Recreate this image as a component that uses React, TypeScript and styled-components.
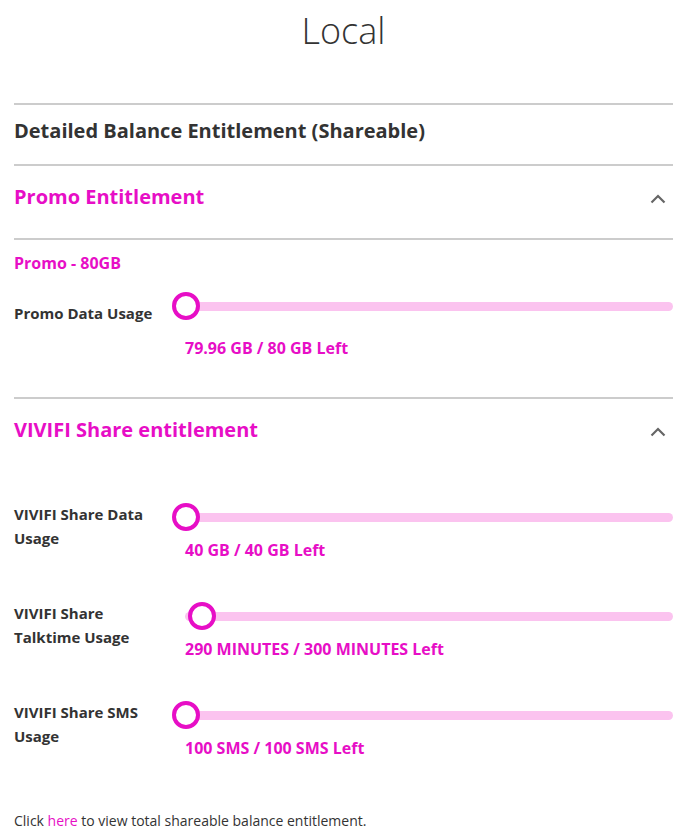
import React from "react";
import styled, { createGlobalStyle } from "styled-components";

const Global = createGlobalStyle`
  html, body { margin: 0; padding: 0; background: #fff; }
  body { font-family: "Open Sans", "Liberation Sans", sans-serif; color: #333; }
  * { box-sizing: border-box; }
`;

const MAGENTA = "#e70ec6";
const TRACK = "#fbc3ef";

const Page = styled.div`
  padding: 7px 21px 0 14px;
  width: 694px;
`;

const Title = styled.h1`
  margin: 0 0 48px;
  font-size: 36px;
  line-height: 48px;
  font-weight: 300;
  text-align: center;
  color: #333;
`;

const Block = styled.section`
  border-top: 2px solid #cccccc;
`;

const MainHeading = styled.h2`
  margin: 0;
  padding: 13px 0 20px;
  font-size: 20px;
  line-height: 26px;
  font-weight: 700;
  color: #333;
`;

const AccordionHeader = styled.div<{ $divider?: boolean }>`
  display: flex;
  align-items: center;
  justify-content: space-between;
  padding: ${(p) => (p.$divider ? "17px 0 27px" : "17px 0 0")};
  border-bottom: ${(p) => (p.$divider ? "2px solid #cccccc" : "none")};
`;

const AccordionTitle = styled.h3`
  margin: 0;
  font-size: 20px;
  line-height: 28px;
  font-weight: 700;
  color: ${MAGENTA};
`;

const Chevron = styled.svg`
  width: 16px;
  height: 10px;
  margin-right: 7px;
  margin-top: 4px;
`;

const Body = styled.div<{ $top: number; $bottom: number }>`
  padding-top: ${(p) => p.$top}px;
  padding-bottom: ${(p) => p.$bottom}px;
  display: flex;
  flex-direction: column;
`;

const PlanName = styled.div`
  font-size: 16px;
  line-height: 22px;
  font-weight: 700;
  color: ${MAGENTA};
  margin-bottom: 18px;
`;

const UsageRow = styled.div<{ $gap: number }>`
  display: grid;
  grid-template-columns: 158px 1fr;
  align-items: start;
  & + & { margin-top: ${(p) => p.$gap}px; }
`;

const Label = styled.div<{ $offset: number }>`
  margin-top: ${(p) => p.$offset}px;
  font-size: 15px;
  line-height: 24px;
  font-weight: 700;
  color: #333;
  padding-right: 8px;
`;

const SliderCol = styled.div`
  display: flex;
  flex-direction: column;
`;

const Slider = styled.div`
  position: relative;
  height: 28px;
  display: flex;
  align-items: center;
  padding-left: 13px;
`;

const Track = styled.div`
  flex: 1;
  height: 9px;
  border-radius: 5px;
  background: ${TRACK};
`;

const Thumb = styled.div`
  position: absolute;
  top: 0;
  width: 28px;
  height: 28px;
  border-radius: 50%;
  border: 4px solid ${MAGENTA};
  background: #fff;
`;

const Value = styled.div<{ $gap: number }>`
  margin-top: ${(p) => p.$gap}px;
  padding-left: 13px;
  font-size: 16px;
  line-height: 22px;
  font-weight: 700;
  color: ${MAGENTA};
`;

const Footer = styled.p`
  margin: 0;
  font-size: 14px;
  line-height: 20px;
  font-weight: 400;
  color: #333;
`;

const Link = styled.a`
  color: ${MAGENTA};
  text-decoration: none;
`;

const ChevronUp = () => (
  <Chevron viewBox="0 0 16 10" fill="none">
    <path d="M1.5 8.5 L8 2 L14.5 8.5" stroke="#666" strokeWidth="2.2" />
  </Chevron>
);

type Usage = { label: string; used: number; total: number; value: string };

const TRACK_SPAN = 488;

const UsageSlider = ({
  u,
  labelOffset,
  valueGap,
  gap,
}: {
  u: Usage;
  labelOffset: number;
  valueGap: number;
  gap: number;
}) => {
  const left = Math.round((u.used / u.total) * TRACK_SPAN);
  return (
    <UsageRow $gap={gap}>
      <Label $offset={labelOffset}>{u.label}</Label>
      <SliderCol>
        <Slider>
          <Track />
          <Thumb style={{ left }} />
        </Slider>
        <Value $gap={valueGap}>{u.value}</Value>
      </SliderCol>
    </UsageRow>
  );
};

const shares: Usage[] = [
  { label: "VIVIFI Share Data Usage", used: 0, total: 40, value: "40 GB / 40 GB Left" },
  { label: "VIVIFI Share Talktime Usage", used: 10, total: 300, value: "290 MINUTES / 300 MINUTES Left" },
  { label: "VIVIFI Share SMS Usage", used: 0, total: 100, value: "100 SMS / 100 SMS Left" },
];

export default function App() {
  return (
    <Page>
      <Global />
      <Title>Local</Title>
      <Block>
        <MainHeading>Detailed Balance Entitlement (Shareable)</MainHeading>
      </Block>
      <Block>
        <AccordionHeader $divider>
          <AccordionTitle>Promo Entitlement</AccordionTitle>
          <ChevronUp />
        </AccordionHeader>
        <Body $top={12} $bottom={38}>
          <PlanName>Promo - 80GB</PlanName>
          <UsageSlider
            u={{ label: "Promo Data Usage", used: 0.04, total: 80, value: "79.96 GB / 80 GB Left" }}
            labelOffset={9}
            valueGap={17}
            gap={0}
          />
        </Body>
      </Block>
      <Block>
        <AccordionHeader>
          <AccordionTitle>VIVIFI Share entitlement</AccordionTitle>
          <ChevronUp />
        </AccordionHeader>
        <Body $top={59} $bottom={52}>
          {shares.map((u) => (
            <UsageSlider key={u.label} u={u} labelOffset={-1} valueGap={8} gap={41} />
          ))}
        </Body>
      </Block>
      <Footer>
        Click <Link href="#">here</Link> to view total shareable balance entitlement.
      </Footer>
    </Page>
  );
}
